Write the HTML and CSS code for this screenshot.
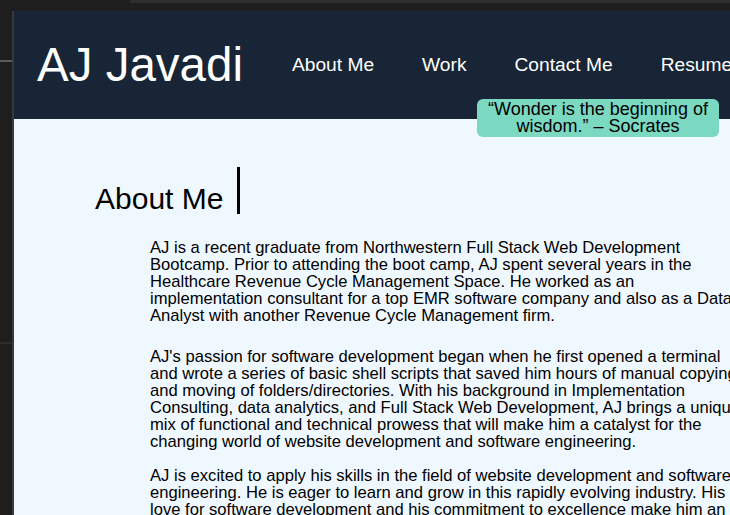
FILE: index.html
```html
<!DOCTYPE html>
<html lang="en">
<head>
<meta charset="utf-8">
<title>AJ Javadi</title>
<link rel="stylesheet" href="styles.css">
</head>
<body>
  <div class="topbar">
    <div class="topbar-spacer"></div>
    <div class="topbar-tab"></div>
  </div>
  <div class="frame">
    <aside class="gutter">
      <div class="gutter-line gutter-line-1"></div>
      <div class="gutter-line gutter-line-2"></div>
    </aside>
    <div class="page">
      <header class="site-header">
        <h1 class="site-title">AJ Javadi</h1>
        <nav class="site-nav">
          <a href="#about">About Me</a>
          <a href="#work">Work</a>
          <a href="#contact">Contact Me</a>
          <a href="#resume">Resume</a>
        </nav>
        <div class="quote">“Wonder is the beginning of wisdom.” – Socrates</div>
      </header>
      <main class="content" id="about">
        <h2 class="section-title">About Me</h2>
        <p class="bio bio-1">AJ is a recent graduate from Northwestern Full Stack Web Development Bootcamp. Prior to attending the boot camp, AJ spent several years in the Healthcare Revenue Cycle Management Space. He worked as an implementation consultant for a top EMR software company and also as a Data Analyst with another Revenue Cycle Management firm.</p>
        <p class="bio bio-2">AJ's passion for software development began when he first opened a terminal and wrote a series of basic shell scripts that saved him hours of manual copying and moving of folders/directories. With his background in Implementation Consulting, data analytics, and Full Stack Web Development, AJ brings a unique mix of functional and technical prowess that will make him a catalyst for the changing world of website development and software engineering.</p>
        <p class="bio bio-3">AJ is excited to apply his skills in the field of website development and software engineering. He is eager to learn and grow in this rapidly evolving industry. His love for software development and his commitment to excellence make him an ideal addition to any development team.</p>
      </main>
    </div>
  </div>
</body>
</html>
```

FILE: styles.css
```css
html, body {
  margin: 0;
  padding: 0;
  height: 515px;
  overflow: hidden;
}

body {
  background: #1e1e1e;
  font-family: "Liberation Sans", Arial, Helvetica, sans-serif;
  color: #000;
}

.topbar {
  display: flex;
  height: 11px;
}

.topbar-spacer {
  width: 130px;
}

.topbar-tab {
  flex: 1;
  height: 3px;
  background: #2e2e2e;
}

.frame {
  display: flex;
  height: 504px;
}

.gutter {
  width: 12px;
  flex: none;
  border-right: 2px solid #383838;
  display: flex;
  flex-direction: column;
}

.gutter-line {
  height: 2px;
}

.gutter-line-1 {
  margin-top: 49px;
  background: #5a5a5a;
}

.gutter-line-2 {
  margin-top: 280px;
  height: 2px;
  background: #2c2c2c;
}

.page {
  flex: 1;
  min-width: 0;
  display: flex;
  flex-direction: column;
  background: #f0f8ff;
}

.site-header {
  position: relative;
  height: 108px;
  flex: none;
  display: flex;
  align-items: center;
  padding-left: 23px;
  background: #172536;
  white-space: nowrap;
}

.site-title {
  margin: 0 0 2px 0;
  font-size: 47.5px;
  font-weight: normal;
  color: #fff;
}

.site-nav {
  display: flex;
  gap: 48px;
  margin-left: 49px;
  font-size: 19.2px;
}

.site-nav a {
  color: #fff;
  text-decoration: none;
}

.quote {
  position: absolute;
  left: 463px;
  top: 88px;
  width: 242px;
  height: 38px;
  box-sizing: border-box;
  padding: 2px 8px 0;
  background: #7bd9c1;
  border-radius: 6px;
  font-size: 18px;
  line-height: 17px;
  text-align: center;
  white-space: normal;
  color: #000;
}

.content {
  flex: 1;
  padding-top: 48px;
}

.section-title {
  display: inline-block;
  margin: 0 0 0 81px;
  padding: 17px 14px 0 0;
  font-size: 30px;
  line-height: 30px;
  font-weight: normal;
  border-right: 3px solid #000;
}

.bio {
  width: 596px;
  margin: 0 0 0 136px;
  font-size: 16.6px;
  line-height: 17px;
}

.bio-1 {
  margin-top: 25px;
  margin-bottom: 24px;
}

.bio-2 {
  margin-bottom: 17px;
}
```
